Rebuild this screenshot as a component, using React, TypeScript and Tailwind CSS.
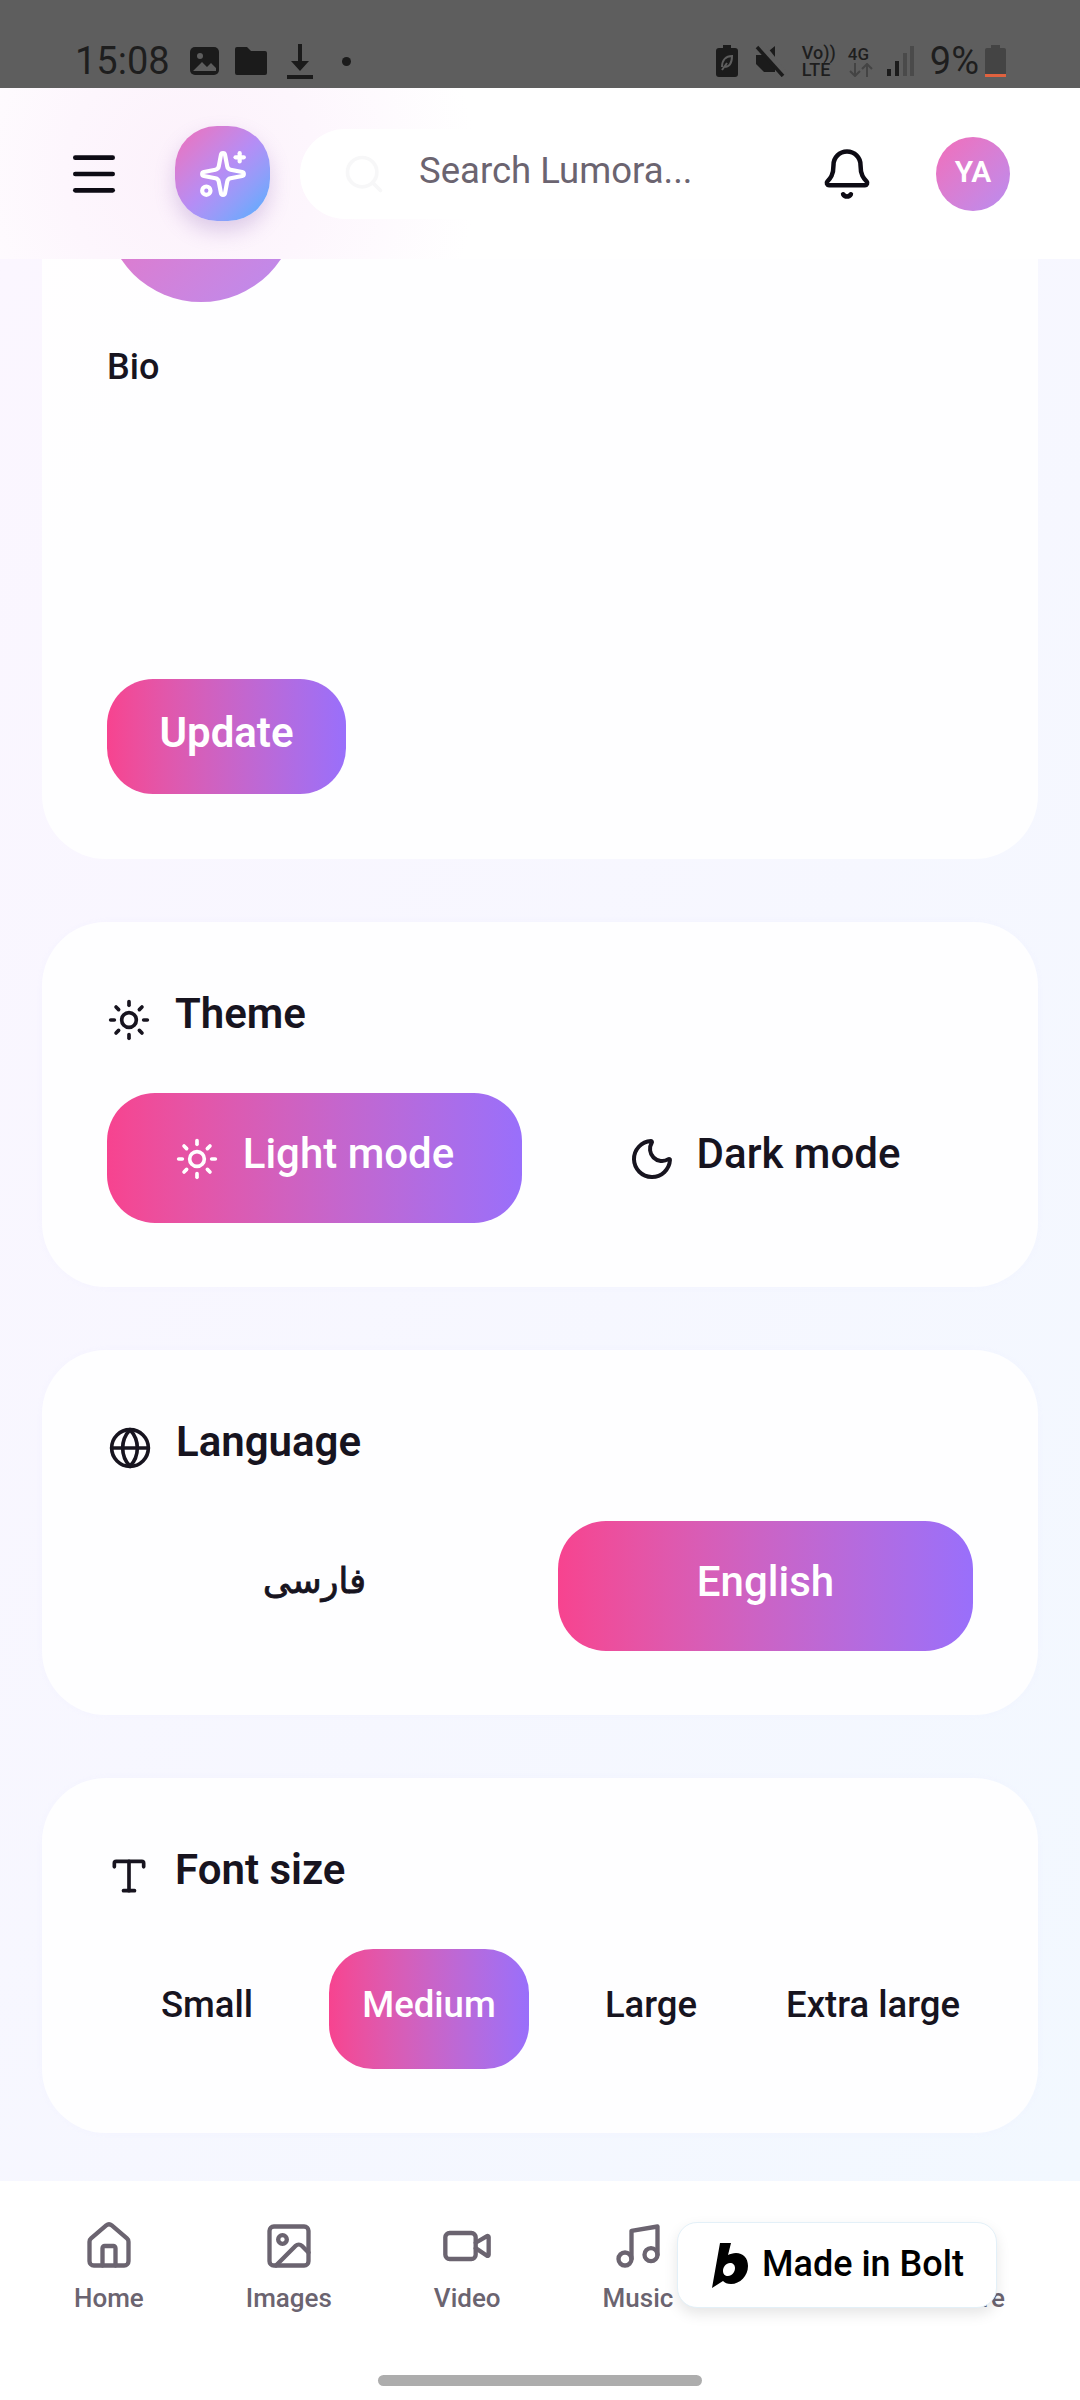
import { Bell, Globe, House, Image, Menu, Moon, Music, Search, Sparkles, Sun, Type, Video } from "lucide-react";

const SectionTitle = ({ icon, title }: { icon: React.ReactNode; title: string }) => (
  <div className="flex h-[64px] items-start gap-[24px]">
    <div className="mt-[12px]">{icon}</div>
    <h2 className="mt-[1px] text-[42px] leading-[54px] font-semibold text-[#17141f]">{title}</h2>
  </div>
);

const Card = ({ children }: { children: React.ReactNode }) => (
  <section className="shrink-0 rounded-[64px] bg-white/90 px-[65px] py-[64px] shadow-[0_0_6px_rgba(240,240,255,0.4)]">
    {children}
  </section>
);

const ChoiceButton = ({
  active,
  children,
  className,
}: {
  active?: boolean;
  children: React.ReactNode;
  className?: string;
}) => (
  <div
    className={`flex items-center justify-center font-medium ${
      active ? "bg-linear-to-r from-[#f7438f] to-[#996ffb] text-white" : "text-[#17141f]"
    } ${className}`}
  >
    {children}
  </div>
);

const StatusBar = () => (
  <div className="flex h-[88px] items-center bg-[#5e5e5e] pt-[34px] pl-[75px] pr-[74px] font-['Roboto'] text-[#1e1e1e]">
    <span className="w-[110px] text-[38px] leading-none">15:08</span>
    <svg width="34" height="32" viewBox="0 0 34 32" className="ml-[3px]">
      <rect x="2" y="2" width="29" height="28" rx="5" fill="#1b1b1b" />
      <circle cx="12" cy="11" r="3" fill="#5e5e5e" />
      <path d="M5 26l9-9 5 5 4-4 5 5v3z" fill="#5e5e5e" />
    </svg>
    <svg width="34" height="30" viewBox="0 0 34 30" className="ml-[12px]">
      <path d="M1 3a2 2 0 0 1 2-2h10l4 4h14a2 2 0 0 1 2 2v20a2 2 0 0 1-2 2H3a2 2 0 0 1-2-2z" fill="#1b1b1b" />
    </svg>
    <svg width="28" height="36" viewBox="0 0 28 36" className="ml-[18px]">
      <path d="M12 1h4v17h7L14 28 5 18h7z" fill="#1b1b1b" />
      <rect x="1" y="32" width="26" height="4" fill="#1b1b1b" />
    </svg>
    <span className="ml-[28px] h-[9px] w-[9px] rounded-full bg-[#1b1b1b]" />
    <div className="ml-auto flex items-center">
      <svg width="22" height="32" viewBox="0 0 22 32">
        <path d="M7 0h8v3h4a3 3 0 0 1 3 3v23a3 3 0 0 1-3 3H3a3 3 0 0 1-3-3V6a3 3 0 0 1 3-3h4z" fill="#1b1b1b" />
        <path d="M6 22c0-7 4-11 10-11 0 7-3 11-8 11M6 25l5-7" stroke="#5e5e5e" strokeWidth="2" fill="none" />
      </svg>
      <svg width="32" height="32" viewBox="0 0 32 32" className="ml-[17px]">
        <path d="M1 10h8l11-9v26H9l-8-8z" fill="#1b1b1b" />
        <path d="M6 0l24 30" stroke="#5e5e5e" strokeWidth="7" />
        <path d="M2 2l26 29" stroke="#1b1b1b" strokeWidth="3.5" />
      </svg>
      <div className="ml-[15px] flex w-[34px] flex-col text-[18px] leading-[17px] font-medium">
        <span>Vo))</span>
        <span>LTE</span>
      </div>
      <div className="ml-[12px] flex w-[26px] flex-col text-[17px] leading-[17px] font-medium">
        <span>4G</span>
        <svg width="26" height="14" viewBox="0 0 26 14" className="text-[#444]">
          <path d="M7 0v13M2 8l5 5 5-5M19 14V1M14 6l5-5 5 5" stroke="currentColor" strokeWidth="2" fill="none" />
        </svg>
      </div>
      <svg width="28" height="32" viewBox="0 0 28 32" className="ml-[12px]">
        <rect x="1" y="24" width="4" height="7" fill="#1b1b1b" />
        <rect x="9" y="16" width="4" height="15" fill="#1b1b1b" />
        <rect x="17" y="8" width="4" height="23" fill="#4a4a4a" />
        <rect x="24" y="1" width="4" height="30" fill="#4a4a4a" />
      </svg>
      <span className="ml-[16px] text-[38px] leading-none">9%</span>
      <svg width="21" height="32" viewBox="0 0 21 32" className="ml-[6px]">
        <path d="M6 0h9v3h4a2 2 0 0 1 2 2v27H0V5a2 2 0 0 1 2-2h4z" fill="#444" />
        <rect y="29" width="21" height="3" fill="#e0623f" />
      </svg>
    </div>
  </div>
);

const Header = () => (
  <header className="relative z-10 flex h-[171px] items-center bg-[radial-gradient(circle_at_190px_85px,#fcf1fb_0%,#fdf6fd_14%,#ffffff_32%)] pl-[66px]">
    <Menu size={56} strokeWidth={2} className="text-[#0d0b14]" />
    <div className="ml-[53px] flex h-[95px] w-[95px] items-center justify-center rounded-[42px] bg-linear-to-br from-[#f06db8] via-[#b58df5] to-[#3fb0ff] shadow-[0_10px_20px_rgba(150,110,190,0.3)]">
      <Sparkles size={50} strokeWidth={2} className="text-white" />
    </div>
    <div className="ml-[30px] flex h-[90px] w-[460px] items-center rounded-full bg-white pl-[42px]">
      <Search size={44} strokeWidth={2} className="text-[#f7f7f8]" />
      <span className="mb-[5px] ml-[33px] text-[36.5px] leading-none text-[#6b6470]">Search Lumora...</span>
    </div>
    <Bell size={54} strokeWidth={2} className="ml-[60px] text-[#0d0b14]" />
    <div className="ml-[62px] flex h-[74px] w-[74px] items-center justify-center rounded-full bg-linear-to-br from-[#f26db9] to-[#b98cf0] pb-[4px] text-[30px] font-semibold text-white">
      YA
    </div>
  </header>
);

const navItems = [
  { label: "Home", icon: House },
  { label: "Images", icon: Image },
  { label: "Video", icon: Video },
  { label: "Music", icon: Music },
];

const BottomNav = () => (
  <nav className="relative h-[219px] bg-white/95 pl-[74px] pr-[75px] pt-[39px]">
    <div className="flex gap-[102px]">
      {navItems.map(({ label, icon: Icon }) => (
        <div key={label} className="flex flex-col items-center text-[#6b6470]">
          <Icon size={52} strokeWidth={2} />
          <span className="mt-[10px] text-[26px] leading-[32px] font-medium">{label}</span>
        </div>
      ))}
      <div className="ml-auto mt-[62px] text-[26px] leading-[32px] font-medium text-[#6b6470]">More</div>
    </div>
    <div className="absolute top-[41px] left-[677px] flex h-[86px] w-[320px] items-center gap-[13px] rounded-[20px] border border-[#e3f0f8] bg-white pl-[33px] shadow-[0_6px_14px_rgba(0,0,0,0.1)]">
      <svg width="38" height="46" viewBox="0 0 38 46">
        <path
          fillRule="evenodd"
          d="M9 1h11l-3 12c2-1 5-2 8-2 7 0 12 5 12 13 0 10-8 18-17 18-4 0-6-1-8-3l-11 7zM19 21c-4 0-7 4-7 8 0 3 2 5 5 5 4 0 7-4 7-8 0-3-2-5-5-5z"
          fill="#000"
        />
      </svg>
      <span className="mb-[3px] text-[36px] leading-none font-medium text-black">Made in Bolt</span>
    </div>
    <div className="absolute top-[194px] left-[378px] h-[11px] w-[324px] rounded-full bg-[#adadad]" />
  </nav>
);

export default function App() {
  return (
    <div className="flex h-[2400px] w-[1080px] flex-col overflow-hidden font-[family-name:Roboto,'DejaVu_Sans',sans-serif]">
      <StatusBar />
      <Header />
      <main className="flex min-h-0 flex-1 flex-col gap-[63px] bg-linear-to-br from-[#fbf6ff] to-[#f2f8ff] px-[42px]">
        <section className="-mt-[149px] shrink-0 rounded-[64px] bg-white/90 px-[65px] pb-[65px]">
          <div className="-ml-[2px] h-[192px] w-[192px] rounded-full bg-linear-to-br from-[#f26db9] to-[#b98cf0]" />
          <label className="mt-[45px] block text-[36px] leading-[40px] font-medium text-[#17141f]">Bio</label>
          <div className="h-[292px]" />
          <button className="h-[115px] w-[239px] rounded-[46px] bg-linear-to-r from-[#f7438f] to-[#996ffb] pb-[8px] text-[42px] font-semibold text-white">
            Update
          </button>
        </section>

        <Card>
          <SectionTitle icon={<Sun size={44} strokeWidth={2} className="text-[#17141f]" />} title="Theme" />
          <div className="mt-[43px] grid grid-cols-2 gap-[36px] text-[42px]">
            <ChoiceButton active className="h-[130px] gap-[24px] rounded-[48px] pb-[10px]">
              <Sun size={44} strokeWidth={2} className="mt-[12px]" />
              Light mode
            </ChoiceButton>
            <ChoiceButton className="h-[130px] gap-[21px] rounded-[48px] pr-[3px] pb-[10px]">
              <Moon size={48} strokeWidth={2} className="mt-[12px]" />
              Dark mode
            </ChoiceButton>
          </div>
        </Card>

        <Card>
          <SectionTitle icon={<Globe size={44} strokeWidth={2} className="ml-[1px] text-[#17141f]" />} title="Language" />
          <div className="mt-[43px] grid grid-cols-2 gap-[36px] text-[42px]">
            <ChoiceButton className="h-[130px] rounded-[48px] pb-[8px] text-[35px] [-webkit-text-stroke:0.9px_#17141f]">
              فارسی
            </ChoiceButton>
            <ChoiceButton active className="h-[130px] rounded-[48px] pb-[10px]">
              English
            </ChoiceButton>
          </div>
        </Card>

        <Card>
          <SectionTitle icon={<Type size={44} strokeWidth={2} className="text-[#17141f]" />} title="Font size" />
          <div className="mt-[43px] grid grid-cols-[repeat(4,200px)] gap-x-[22px] text-[36.5px]">
            <ChoiceButton className="h-[120px] rounded-[44px] pb-[8px]">Small</ChoiceButton>
            <ChoiceButton active className="h-[120px] rounded-[44px] pb-[8px]">
              Medium
            </ChoiceButton>
            <ChoiceButton className="h-[120px] rounded-[44px] pb-[8px]">Large</ChoiceButton>
            <ChoiceButton className="h-[120px] rounded-[44px] pb-[8px]">Extra large</ChoiceButton>
          </div>
        </Card>
      </main>
      <BottomNav />
    </div>
  );
}
